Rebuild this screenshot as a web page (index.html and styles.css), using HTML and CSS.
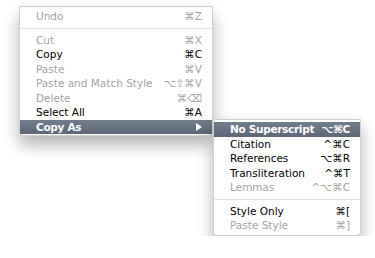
FILE: index.html
```html
<!DOCTYPE html>
<html lang="en">
<head>
    <meta charset="UTF-8">
    <title>Edit Menu</title>
    <link rel="stylesheet" href="styles.css">
</head>
<body>
    <div class="stage">
        <div class="menu main">
            <div class="item off"><span>Undo</span><span class="key">⌘Z</span></div>
            <div class="sep"></div>
            <div class="item off"><span>Cut</span><span class="key">⌘X</span></div>
            <div class="item"><span>Copy</span><span class="key">⌘C</span></div>
            <div class="item off"><span>Paste</span><span class="key">⌘V</span></div>
            <div class="item off"><span>Paste and Match Style</span><span class="key">⌥⇧⌘V</span></div>
            <div class="item off"><span>Delete</span><span class="key">⌘⌫</span></div>
            <div class="item"><span>Select All</span><span class="key">⌘A</span></div>
            <div class="item active"><span>Copy As</span><span class="arrow"></span></div>
        </div>
        <div class="menu sub">
            <div class="item active"><span>No Superscript</span><span class="key">⌥⌘C</span></div>
            <div class="item"><span>Citation</span><span class="key">^⌘C</span></div>
            <div class="item"><span>References</span><span class="key">⌥⌘R</span></div>
            <div class="item"><span>Transliteration</span><span class="key">^⌘T</span></div>
            <div class="item off"><span>Lemmas</span><span class="key">^⌥⌘C</span></div>
            <div class="sep"></div>
            <div class="item"><span>Style Only</span><span class="key">⌘[</span></div>
            <div class="item off"><span>Paste Style</span><span class="key">⌘]</span></div>
        </div>
    </div>
</body>
</html>
```

FILE: styles.css
```css
body {
    margin: 0;
    background: #fff;
    font-family: "DejaVu Sans", "Liberation Sans", sans-serif;
    font-size: 10.5px;
    color: #000;
}
.stage {
    display: flex;
    align-items: flex-start;
    padding: 6px 0 0 19px;
}
.menu {
    background: #fff;
    border: 1px solid #d0d0d0;
    border-radius: 0 0 4px 4px;
    box-shadow: 0 9px 16px rgba(0, 0, 0, 0.3);
}
.main {
    width: 192px;
    padding: 2px 0 1px;
}
.sub {
    width: 146px;
    margin-top: 113px;
    padding: 2px 0 2px;
}
.item {
    display: flex;
    justify-content: space-between;
    align-items: center;
    height: 14.5px;
    line-height: 14.5px;
    padding: 0 10px 0 16px;
}
.off {
    color: #a3a3a3;
}
.active {
    background: linear-gradient(#737e8d, #5d6776);
    color: #fff;
    font-weight: bold;
    letter-spacing: -0.3px;
}
.arrow {
    width: 0;
    height: 0;
    border-left: 6px solid #fff;
    border-top: 4px solid transparent;
    border-bottom: 4px solid transparent;
}
.sep {
    height: 1px;
    margin: 4px 0 4px;
    background: #e2e2e2;
}
```
